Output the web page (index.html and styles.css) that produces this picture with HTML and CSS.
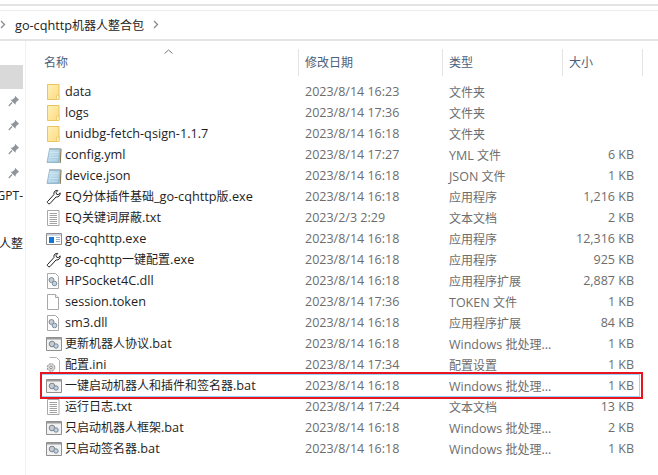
FILE: index.html
```html
<!DOCTYPE html>
<html lang="zh-CN">
<head>
<meta charset="utf-8">
<title>go-cqhttp机器人整合包</title>
<link rel="stylesheet" href="styles.css">
</head>
<body>
<svg class="defs" width="0" height="0" aria-hidden="true">
  <defs>
    <linearGradient id="g-folder" x1="0" y1="0" x2="1" y2="1"><stop offset="0" stop-color="#fff0b8"/><stop offset="1" stop-color="#ffdc80"/></linearGradient>
    <linearGradient id="g-note" x1="0" y1="0" x2="1" y2="1"><stop offset="0" stop-color="#d4e8f2"/><stop offset="1" stop-color="#8fbdd8"/></linearGradient>
  </defs>
  <symbol id="i-folder" viewBox="0 0 16 16">
    <path d="M1.500 .5h11.500v15H1.500z" fill="url(#g-folder)" stroke="#e8c560"/>
    <path d="M10.500 15.500v-4l2.500-1v5z" fill="#fff3c8" stroke="#e8c560" stroke-width=".8"/>
  </symbol>
  <symbol id="i-note" viewBox="0 0 16 16">
    <path d="M3.500 2.500h10.500l-1 13H1z" fill="url(#g-note)" stroke="#86aec6" stroke-width=".8"/>
    <path d="M3.500 1.500h11" stroke="#62707c" stroke-dasharray="1 1"/>
    <path d="M15 2l-.8 14" stroke="#8d7f58" stroke-width="1.200"/>
    <path d="M3.500 5.500h9M3 8h9M2.700 10.500h9.500M2.300 13h9.500" stroke="#d6e8f2" stroke-width=".8"/>
  </symbol>
  <symbol id="i-wrench" viewBox="0 0 16 16">
    <path d="M1.300 12.800l6.700-7.300c-.5-1.800.4-3.600 2.200-4 .7-.2 1.200-.1 1.600 0l-1.800 2 .6 1.700 1.700.5 1.800-1.900c.3 1.600-.5 3.400-2.200 4-.8.300-1.300.2-1.800.1l-6.200 6.800c-1.200.7-2.700-.7-2.600-1.900z" fill="#fff" stroke="#222" stroke-width="1" stroke-linejoin="round"/>
  </symbol>
  <symbol id="i-text" viewBox="0 0 16 16">
    <path d="M1.500 .5h11.500v15H1.500z" fill="#fff" stroke="#a8a8a8"/>
    <path d="M3.500 3.500h7.500M3.500 5.500h7.500M3.500 7.500h7.500M3.500 9.500h7.500M3.500 11.500h7.500M3.500 13.500h7.500" stroke="#a2a2a2"/>
  </symbol>
  <symbol id="i-exe" viewBox="0 0 16 16">
    <path d="M.5 2.500h15v11H.5z" fill="#fff" stroke="#8c8c8c"/>
    <path d="M1 3h14v1.800H1z" fill="#c9d4e0"/>
    <path d="M3 6h5v6H3z" fill="#0e77d8"/>
    <path d="M10 6.500h4M10 8.500h4M10 10.500h4" stroke="#9ab0c4"/>
  </symbol>
  <symbol id="i-dll" viewBox="0 0 16 16">
    <path d="M1.500 .5h8l3 3v12h-11z" fill="#fff" stroke="#a8a8a8"/>
    <circle cx="5.500" cy="7" r="2.500" fill="#c6ccd2" stroke="#808a94"/>
    <circle cx="8.500" cy="10.500" r="2.300" fill="#b9d3ea" stroke="#808a94"/>
  </symbol>
  <symbol id="i-blank" viewBox="0 0 16 16">
    <path d="M1.500 .5h8l3 3v12h-11z" fill="#fff" stroke="#a8a8a8"/>
    <path d="M9.500 .5v3h3" fill="#eee" stroke="#a8a8a8"/>
  </symbol>
  <symbol id="i-bat" viewBox="0 0 16 16">
    <path d="M.5 1.500h15v13H.5z" fill="#f2f2f2" stroke="#8f8f8f"/>
    <path d="M1 2h14v1.500H1z" fill="#9c9c9c"/>
    <circle cx="6" cy="8" r="2.800" fill="#c6ccd2" stroke="#7a848e"/>
    <circle cx="10" cy="10" r="2.200" fill="#bcd6ec" stroke="#7a848e"/>
  </symbol>
  <symbol id="i-ini" viewBox="0 0 16 16">
    <path d="M3.500 .5h7l3 3v12h-11" fill="#fff" stroke="#b5b5b5"/>
    <circle cx="5" cy="10.500" r="3.800" fill="#d8d8d8" stroke="#8e8e8e" stroke-dasharray="2 1"/>
    <circle cx="5" cy="10.500" r="1.300" fill="#fff" stroke="#8e8e8e"/>
  </symbol>
  <symbol id="i-pin" viewBox="0 0 12 12">
    <path d="M7 .8l4.200 4.200-1.400.6-2 2-.4 2.200L2.600 5l2.200-.5 2-2z" fill="#8e949a"/>
    <path d="M4 7.500L.8 11" stroke="#8e949a" stroke-width="1.200"/>
  </symbol>
</svg>

<div class="window">
  <div class="topstrip"></div>
  <div class="crumbs">
    <svg class="chev" width="6" height="9" viewBox="0 0 6 9"><path d="M1 1l3.500 3.500L1 8" fill="none" stroke="#8a8a8a" stroke-width="1.300"/></svg>
    <span class="crumb">go-cqhttp<span class="c">机器人整合包</span></span>
    <svg class="chev" width="6" height="9" viewBox="0 0 6 9"><path d="M1 1l3.500 3.500L1 8" fill="none" stroke="#8a8a8a" stroke-width="1.300"/></svg>
  </div>
  <div class="main">
    <aside class="side">
      <div class="side-row side-sel"></div>
      <div class="side-row"><svg class="pin" width="12" height="12"><use href="#i-pin"/></svg></div>
      <div class="side-row"><svg class="pin" width="12" height="12"><use href="#i-pin"/></svg></div>
      <div class="side-row"><svg class="pin" width="12" height="12"><use href="#i-pin"/></svg></div>
      <div class="side-row"><svg class="pin" width="12" height="12"><use href="#i-pin"/></svg></div>
      <div class="side-row side-text"><span>ChatGPT-</span></div>
      <div class="side-row"></div>
      <div class="side-row side-text"><span>机器人整</span></div>
    </aside>
    <section class="list">
      <div class="head">
        <svg class="caret" width="9" height="5" viewBox="0 0 9 5"><path d="M.5 4.500l4-3.500 4 3.500" fill="none" stroke="#7a7a7a"/></svg>
        <div class="hcell h-name">名称</div>
        <div class="hcell h-date">修改日期</div>
        <div class="hcell h-type">类型</div>
        <div class="hcell h-size">大小</div>
      </div>
      <div class="rows">
        <div class="row"><svg class="ico"><use href="#i-folder"/></svg><span class="name">data</span><span class="cell">2023/8/14 16:23</span><span class="cell"><span class="c">文件夹</span></span><span class="cell size"></span></div>
        <div class="row"><svg class="ico"><use href="#i-folder"/></svg><span class="name">logs</span><span class="cell">2023/8/14 17:36</span><span class="cell"><span class="c">文件夹</span></span><span class="cell size"></span></div>
        <div class="row"><svg class="ico"><use href="#i-folder"/></svg><span class="name">unidbg-fetch-qsign-1.1.7</span><span class="cell">2023/8/14 16:18</span><span class="cell"><span class="c">文件夹</span></span><span class="cell size"></span></div>
        <div class="row"><svg class="ico"><use href="#i-note"/></svg><span class="name">config.yml</span><span class="cell">2023/8/14 17:27</span><span class="cell">YML <span class="c">文件</span></span><span class="cell size">6 KB</span></div>
        <div class="row"><svg class="ico"><use href="#i-note"/></svg><span class="name">device.json</span><span class="cell">2023/8/14 16:18</span><span class="cell">JSON <span class="c">文件</span></span><span class="cell size">1 KB</span></div>
        <div class="row"><svg class="ico"><use href="#i-wrench"/></svg><span class="name">EQ<span class="c">分体插件基础</span>_go-cqhttp<span class="c">版</span>.exe</span><span class="cell">2023/8/14 16:18</span><span class="cell"><span class="c">应用程序</span></span><span class="cell size">1,216 KB</span></div>
        <div class="row"><svg class="ico"><use href="#i-text"/></svg><span class="name">EQ<span class="c">关键词屏蔽</span>.txt</span><span class="cell">2023/2/3 2:29</span><span class="cell"><span class="c">文本文档</span></span><span class="cell size">2 KB</span></div>
        <div class="row"><svg class="ico"><use href="#i-exe"/></svg><span class="name">go-cqhttp.exe</span><span class="cell">2023/8/14 16:18</span><span class="cell"><span class="c">应用程序</span></span><span class="cell size">12,316 KB</span></div>
        <div class="row"><svg class="ico"><use href="#i-wrench"/></svg><span class="name">go-cqhttp<span class="c">一键配置</span>.exe</span><span class="cell">2023/8/14 16:18</span><span class="cell"><span class="c">应用程序</span></span><span class="cell size">925 KB</span></div>
        <div class="row"><svg class="ico"><use href="#i-dll"/></svg><span class="name">HPSocket4C.dll</span><span class="cell">2023/8/14 16:18</span><span class="cell"><span class="c">应用程序扩展</span></span><span class="cell size">2,887 KB</span></div>
        <div class="row"><svg class="ico"><use href="#i-blank"/></svg><span class="name">session.token</span><span class="cell">2023/8/14 17:36</span><span class="cell">TOKEN <span class="c">文件</span></span><span class="cell size">1 KB</span></div>
        <div class="row"><svg class="ico"><use href="#i-dll"/></svg><span class="name">sm3.dll</span><span class="cell">2023/8/14 16:18</span><span class="cell"><span class="c">应用程序扩展</span></span><span class="cell size">84 KB</span></div>
        <div class="row"><svg class="ico"><use href="#i-bat"/></svg><span class="name"><span class="c">更新机器人协议</span>.bat</span><span class="cell">2023/8/14 16:18</span><span class="cell">Windows <span class="c">批处理</span>...</span><span class="cell size">1 KB</span></div>
        <div class="row"><svg class="ico"><use href="#i-ini"/></svg><span class="name"><span class="c">配置</span>.ini</span><span class="cell">2023/8/14 17:34</span><span class="cell"><span class="c">配置设置</span></span><span class="cell size">1 KB</span></div>
        <div class="row row-sel"><svg class="ico"><use href="#i-bat"/></svg><span class="name"><span class="c">一键启动机器人和插件和签名器</span>.bat</span><span class="cell">2023/8/14 16:18</span><span class="cell">Windows <span class="c">批处理</span>...</span><span class="cell size">1 KB</span><div class="redbox"></div></div>
        <div class="row"><svg class="ico"><use href="#i-text"/></svg><span class="name"><span class="c">运行日志</span>.txt</span><span class="cell">2023/8/14 17:24</span><span class="cell"><span class="c">文本文档</span></span><span class="cell size">13 KB</span></div>
        <div class="row"><svg class="ico"><use href="#i-bat"/></svg><span class="name"><span class="c">只启动机器人框架</span>.bat</span><span class="cell">2023/8/14 16:18</span><span class="cell">Windows <span class="c">批处理</span>...</span><span class="cell size">2 KB</span></div>
        <div class="row"><svg class="ico"><use href="#i-bat"/></svg><span class="name"><span class="c">只启动签名器</span>.bat</span><span class="cell">2023/8/14 16:18</span><span class="cell">Windows <span class="c">批处理</span>...</span><span class="cell size">1 KB</span></div>
      </div>
    </section>
  </div>
</div>
</body>
</html>
```
FILE: styles.css
```css
* { box-sizing: border-box; }
html, body { margin: 0; padding: 0; background: #fff; }
body {
  width: 658px;
  height: 475px;
  overflow: hidden;
  font-family: "Open Sans", "Noto Sans CJK SC", sans-serif;
  font-size: 12.5px;
  color: #1e1e1e;
}
.defs { position: absolute; }
.c { font-size: 12px; }
.window { display: flex; flex-direction: column; height: 475px; }
.topstrip {
  flex: none;
  height: 7px;
  margin-top: 4px;
  border-top: 2px solid #e4e4e4;
  border-bottom: 1px solid #ececec;
}
.crumbs {
  flex: none;
  height: 30px;
  display: flex;
  align-items: center;
  gap: 9px;
  padding-bottom: 1px;
  border-bottom: 2px solid #e4e4e4;
}
.crumb { color: #222; font-size: 12.7px; }
.chev { flex: none; }
.main { flex: 1; display: flex; min-height: 0; }
.side {
  flex: none;
  width: 26px;
  padding-top: 24px;
  border-right: 1px solid #f0f0f0;
  overflow: hidden;
}
.side-row {
  width: 23px;
  height: 24px;
  display: flex;
  align-items: center;
  justify-content: flex-end;
  overflow: hidden;
  white-space: nowrap;
}
.side-sel { background: #d9d9d9; }
.pin { margin-right: 3px; margin-bottom: 1px; }
.side-text { color: #222; font-size: 12px; line-height: 1; padding-bottom: 2px; }
.side-text span { flex: none; }
.list { flex: 1; min-width: 0; padding-left: 14px; }
.head {
  position: relative;
  display: grid;
  grid-template-columns: 259px 144px 120px 80px;
  height: 27px;
  margin-top: 8px;
}
.caret { position: absolute; left: 124px; top: 0; }
.hcell {
  display: flex;
  align-items: center;
  padding-left: 6px;
  padding-bottom: 2px;
  color: #4c607a;
  font-size: 12px;
  border-right: 1px solid #e4e4e4;
}
.h-name { padding-left: 4px; }
.rows { padding-top: 5px; }
.row {
  position: relative;
  display: grid;
  grid-template-columns: 16px 239px 144px 120px 69px;
  align-items: center;
  width: 597px;
  height: 21px;
  margin-left: 2px;
  padding-left: 4px;
  color: #6d6d6d;
  white-space: nowrap;
}
.ico { display: block; width: 16px; height: 16px; }
.name { padding-left: 3px; padding-bottom: 1px; color: #1e1e1e; font-size: 12.7px; }
.cell { padding-left: 4px; overflow: hidden; }
.size { padding-left: 0; text-align: right; }
.row-sel { outline: 1px solid #99d1ff; outline-offset: 0; }
.redbox {
  position: absolute;
  left: -2px;
  right: -4px;
  top: -3px;
  bottom: -3px;
  border: 2px solid #e8141f;
  pointer-events: none;
}
```
